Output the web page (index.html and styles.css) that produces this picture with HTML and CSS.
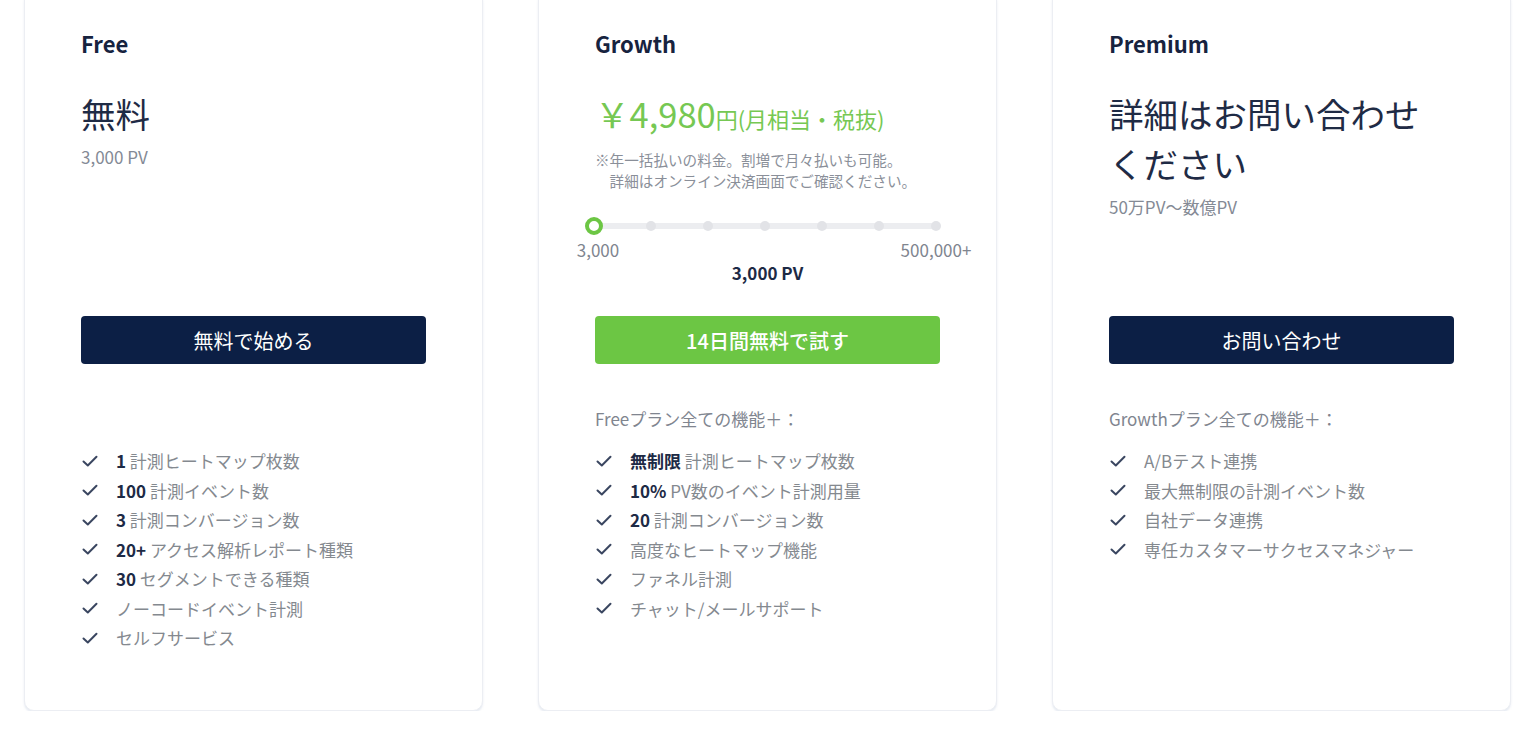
FILE: index.html
```html
<!DOCTYPE html>
<html lang="ja">
<head>
<meta charset="utf-8">
<title>Plans</title>
<link rel="stylesheet" href="styles.css">
</head>
<body>
<div class="plans">
  <section class="card">
    <h2 class="plan-name">Free</h2>
    <div class="top">
      <div class="price">無料</div>
      <div class="sub">3,000 PV</div>
    </div>
    <a class="btn btn-dark">無料で始める</a>
    <div class="feat-head"></div>
    <ul class="features">
      <li><svg class="check" viewBox="0 0 16 16"><path d="M1.5 8.5 L5.8 12.5 L14.5 3.8"/></svg><span><b>1</b> 計測ヒートマップ枚数</span></li>
      <li><svg class="check" viewBox="0 0 16 16"><path d="M1.5 8.5 L5.8 12.5 L14.5 3.8"/></svg><span><b>100</b> 計測イベント数</span></li>
      <li><svg class="check" viewBox="0 0 16 16"><path d="M1.5 8.5 L5.8 12.5 L14.5 3.8"/></svg><span><b>3</b> 計測コンバージョン数</span></li>
      <li><svg class="check" viewBox="0 0 16 16"><path d="M1.5 8.5 L5.8 12.5 L14.5 3.8"/></svg><span><b>20+</b> アクセス解析レポート種類</span></li>
      <li><svg class="check" viewBox="0 0 16 16"><path d="M1.5 8.5 L5.8 12.5 L14.5 3.8"/></svg><span><b>30</b> セグメントできる種類</span></li>
      <li><svg class="check" viewBox="0 0 16 16"><path d="M1.5 8.5 L5.8 12.5 L14.5 3.8"/></svg><span>ノーコードイベント計測</span></li>
      <li><svg class="check" viewBox="0 0 16 16"><path d="M1.5 8.5 L5.8 12.5 L14.5 3.8"/></svg><span>セルフサービス</span></li>
    </ul>
  </section>

  <section class="card">
    <h2 class="plan-name">Growth</h2>
    <div class="top">
      <div class="price green"><span class="amount">￥4,980</span><span class="unit">円(月相当・税抜)</span></div>
      <p class="note">※年一括払いの料金。割増で月々払いも可能。<br>詳細はオンライン決済画面でご確認ください。</p>
      <div class="slider">
        <span class="dot"></span><span class="dot"></span><span class="dot"></span><span class="dot"></span><span class="dot"></span><span class="dot"></span><span class="dot"></span>
        <span class="thumb"></span>
      </div>
      <div class="labels"><span class="lab-min">3,000</span><span>500,000+</span></div>
      <div class="value">3,000 PV</div>
    </div>
    <a class="btn btn-green">14日間無料で試す</a>
    <div class="feat-head">Freeプラン全ての機能＋：</div>
    <ul class="features">
      <li><svg class="check" viewBox="0 0 16 16"><path d="M1.5 8.5 L5.8 12.5 L14.5 3.8"/></svg><span><b>無制限</b> 計測ヒートマップ枚数</span></li>
      <li><svg class="check" viewBox="0 0 16 16"><path d="M1.5 8.5 L5.8 12.5 L14.5 3.8"/></svg><span><b>10%</b> PV数のイベント計測用量</span></li>
      <li><svg class="check" viewBox="0 0 16 16"><path d="M1.5 8.5 L5.8 12.5 L14.5 3.8"/></svg><span><b>20</b> 計測コンバージョン数</span></li>
      <li><svg class="check" viewBox="0 0 16 16"><path d="M1.5 8.5 L5.8 12.5 L14.5 3.8"/></svg><span>高度なヒートマップ機能</span></li>
      <li><svg class="check" viewBox="0 0 16 16"><path d="M1.5 8.5 L5.8 12.5 L14.5 3.8"/></svg><span>ファネル計測</span></li>
      <li><svg class="check" viewBox="0 0 16 16"><path d="M1.5 8.5 L5.8 12.5 L14.5 3.8"/></svg><span>チャット/メールサポート</span></li>
    </ul>
  </section>

  <section class="card">
    <h2 class="plan-name">Premium</h2>
    <div class="top">
      <div class="price">詳細はお問い合わせ<br>ください</div>
      <div class="sub">50万PV〜数億PV</div>
    </div>
    <a class="btn btn-dark">お問い合わせ</a>
    <div class="feat-head">Growthプラン全ての機能＋：</div>
    <ul class="features">
      <li><svg class="check" viewBox="0 0 16 16"><path d="M1.5 8.5 L5.8 12.5 L14.5 3.8"/></svg><span>A/Bテスト連携</span></li>
      <li><svg class="check" viewBox="0 0 16 16"><path d="M1.5 8.5 L5.8 12.5 L14.5 3.8"/></svg><span>最大無制限の計測イベント数</span></li>
      <li><svg class="check" viewBox="0 0 16 16"><path d="M1.5 8.5 L5.8 12.5 L14.5 3.8"/></svg><span>自社データ連携</span></li>
      <li><svg class="check" viewBox="0 0 16 16"><path d="M1.5 8.5 L5.8 12.5 L14.5 3.8"/></svg><span>専任カスタマーサクセスマネジャー</span></li>
    </ul>
  </section>
</div>
</body>
</html>
```

FILE: styles.css
```css
* { box-sizing: border-box; }
html, body { margin: 0; padding: 0; background: #ffffff; }
body {
  font-family: "Noto Sans CJK JP", "Noto Sans", sans-serif;
  color: #1d2a45;
  overflow: hidden;
}
.plans {
  display: grid;
  grid-template-columns: repeat(3, minmax(0, 1fr));
  gap: 55px;
  padding: 0 25px 0 24px;
  margin-top: -10px;
}
.card {
  display: flex;
  flex-direction: column;
  min-width: 0;
  border: 1px solid #eceef3;
  border-radius: 10px;
  box-shadow: 0 2px 2px rgba(210, 218, 232, 0.5);
  padding: 36px 56px 57px;
  background: #fff;
}
.plan-name {
  margin: 0;
  font-size: 22px;
  line-height: 32px;
  font-weight: 700;
  color: #17233f;
}
.top {
  margin-top: 29px;
  height: 228px;
}
.price {
  font-size: 34.5px;
  line-height: 50px;
  color: #1f2b45;
  font-weight: 400;
}
.price.green { color: #76c853; white-space: nowrap; }
.amount { font-size: 34.5px; }
.unit { font-size: 22px; }
.sub {
  margin-top: 9px;
  font-size: 17px;
  line-height: 20px;
  color: #848a95;
}
.note {
  margin: 6px 0 0;
  padding-left: 1em;
  text-indent: -1em;
  font-size: 14.6px;
  line-height: 21px;
  color: #8a8f99;
  white-space: nowrap;
}
.slider {
  position: relative;
  width: 352px;
  height: 18px;
  margin: 26px 0 0 -6px;
  display: flex;
  align-items: center;
  justify-content: space-between;
}
.slider::before {
  content: "";
  position: absolute;
  left: 5px;
  right: 5px;
  top: 6px;
  height: 6px;
  border-radius: 3px;
  background: #ecedf0;
}
.dot {
  position: relative;
  width: 10px;
  height: 10px;
  border-radius: 50%;
  background: #e2e3e7;
}
.thumb {
  position: absolute;
  left: -4px;
  top: 0;
  width: 18px;
  height: 18px;
  border-radius: 50%;
  border: 4px solid #6cc644;
  background: #fff;
}
.labels {
  display: flex;
  justify-content: space-between;
  width: 432px;
  margin: 5px 0 0 -46px;
  font-size: 17px;
  line-height: 20px;
  color: #80858f;
}
.labels span { width: 90px; text-align: center; }
.labels .lab-min { padding-left: 8px; }
.value {
  margin-top: 3px;
  text-align: center;
  font-size: 17px;
  line-height: 20px;
  font-weight: 700;
  color: #1d2a45;
}
.btn {
  display: flex;
  align-items: center;
  justify-content: center;
  height: 48px;
  border-radius: 4px;
  color: #fff;
  font-size: 20px;
  text-decoration: none;
}
.btn-dark { background: #0c1f45; }
.btn-green { background: #6cc644; font-weight: 500; }
.feat-head {
  margin-top: 43px;
  height: 24px;
  font-size: 17px;
  line-height: 24px;
  color: #80858f;
}
.features {
  list-style: none;
  margin: 15px 0 0;
  padding: 0;
}
.features li {
  display: flex;
  align-items: center;
  height: 29.5px;
  font-size: 17px;
  color: #84898f;
  white-space: nowrap;
}
.features b { color: #1d2a45; font-weight: 700; }
.check {
  width: 16px;
  height: 16px;
  margin-left: 1px;
  margin-right: 18px;
  flex: none;
  fill: none;
  stroke: #3a4660;
  stroke-width: 2;
  stroke-linecap: round;
  stroke-linejoin: round;
}
```
